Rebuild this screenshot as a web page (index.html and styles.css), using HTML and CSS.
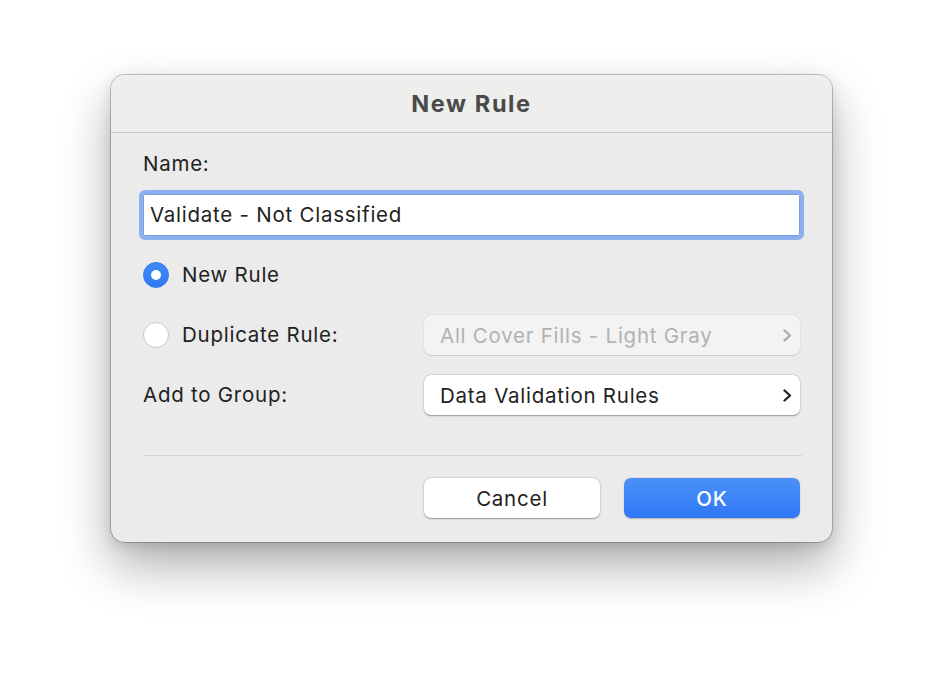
FILE: index.html
```html
<!DOCTYPE html>
<html lang="en">
<head>
<meta charset="utf-8">
<title>New Rule</title>
<link rel="stylesheet" href="styles.css">
</head>
<body>
<div class="dialog">
  <div class="titlebar">New Rule</div>
  <div class="content">
    <div class="label name-label">Name:</div>
    <div class="field">Validate - Not Classified</div>
    <div class="grid">
      <div class="radio-row"><span class="radio on"></span><span class="label">New Rule</span></div>
      <div></div>
      <div class="radio-row"><span class="radio"></span><span class="label">Duplicate Rule:</span></div>
      <div class="popup disabled"><span>All Cover Fills - Light Gray</span>
        <svg class="chev" width="9" height="13" viewBox="0 0 9 13"><path d="M1.5 1.5 L7 6.5 L1.5 11.5" fill="none" stroke="currentColor" stroke-width="2.3" stroke-linecap="round" stroke-linejoin="round"/></svg>
      </div>
      <div class="label">Add to Group:</div>
      <div class="popup"><span>Data Validation Rules</span>
        <svg class="chev" width="9" height="13" viewBox="0 0 9 13"><path d="M1.5 1.5 L7 6.5 L1.5 11.5" fill="none" stroke="currentColor" stroke-width="2.3" stroke-linecap="round" stroke-linejoin="round"/></svg>
      </div>
    </div>
    <div class="sep"></div>
    <div class="buttons">
      <div class="btn cancel">Cancel</div>
      <div class="btn ok">OK</div>
    </div>
  </div>
</div>
</body>
</html>
```

FILE: styles.css
```css
html, body {
  margin: 0;
  padding: 0;
  background: #ffffff;
}
body {
  width: 944px;
  height: 690px;
  display: flex;
  justify-content: flex-start;
  align-items: flex-start;
  padding: 75px 0 0 111px;
  box-sizing: border-box;
  font-family: Inter, "Liberation Sans", sans-serif;
  color: #222222;
}
.dialog {
  width: 721px;
  height: 467px;
  background: #ebebeb;
  border-radius: 14px;
  box-shadow: 0 0 0 1px rgba(0,0,0,0.22), 0 24px 50px rgba(0,0,0,0.32), 0 4px 14px rgba(0,0,0,0.12);
  overflow: hidden;
}
.titlebar {
  height: 56px;
  background: #eeeeed;
  border-bottom: 1px solid #c9c9c9;
  display: flex;
  align-items: center;
  justify-content: center;
  font-size: 23.5px;
  font-weight: 700;
  letter-spacing: 1.6px;
  color: #4a4a4a;
  padding-bottom: 1px;
  box-sizing: content-box;
}
.content {
  padding: 0 32px;
  display: flex;
  flex-direction: column;
}
.label,
.field,
.popup,
.btn {
  font-size: 20.5px;
  letter-spacing: 0.75px;
}
.label {
  line-height: 22px;
  color: #222222;
}
.name-label {
  margin-top: 20px;
}
.field {
  margin-top: 19px;
  height: 42px;
  box-sizing: border-box;
  background: #ffffff;
  border: 1px solid #7d9fe0;
  border-radius: 2px;
  outline: 4px solid #8cb0ee;
  outline-offset: 0;
  padding: 0 0 1px 6px;
  display: flex;
  align-items: center;
  color: #222222;
}
.grid {
  margin-top: 19px;
  display: grid;
  grid-template-columns: 281px 1fr;
  grid-auto-rows: 40px;
  row-gap: 20px;
  align-items: center;
}
.radio-row {
  display: flex;
  align-items: center;
  gap: 13px;
}
.radio {
  width: 26px;
  height: 26px;
  border-radius: 50%;
  box-sizing: border-box;
  background: #ffffff;
  border: 1px solid #cacaca;
  display: flex;
  align-items: center;
  justify-content: center;
}
.radio.on {
  background: linear-gradient(#4089f8, #2f7af4);
  border: 1px solid #2f79ee;
}
.radio.on::after {
  content: "";
  width: 10px;
  height: 10px;
  border-radius: 50%;
  background: #ffffff;
}
.popup {
  height: 40px;
  box-sizing: border-box;
  background: #ffffff;
  border-radius: 7px;
  box-shadow: 0 0.5px 1.5px rgba(0,0,0,0.35), 0 0 0 0.5px rgba(0,0,0,0.06);
  display: flex;
  align-items: center;
  justify-content: space-between;
  padding: 0 8px 0 16px;
  color: #222222;
}
.popup.disabled {
  background: #f3f3f3;
  color: #b2b2b2;
  box-shadow: 0 0.5px 1px rgba(0,0,0,0.12), 0 0 0 0.5px rgba(0,0,0,0.05);
}
.popup .chev {
  color: #222222;
}
.popup.disabled .chev {
  color: #a9a9a9;
}
.sep {
  margin-top: 40px;
  height: 1px;
  background: #d4d4d4;
  margin-right: -2px;
}
.buttons {
  margin-top: 22px;
  display: flex;
  justify-content: flex-end;
  gap: 24px;
}
.btn {
  width: 176px;
  height: 40px;
  border-radius: 7px;
  display: flex;
  align-items: center;
  justify-content: center;
  box-sizing: border-box;
}
.cancel {
  background: #ffffff;
  color: #222222;
  box-shadow: 0 0.5px 1.5px rgba(0,0,0,0.35), 0 0 0 0.5px rgba(0,0,0,0.06);
}
.ok {
  background: linear-gradient(#4a90f8, #2f77f5);
  color: #ffffff;
  font-weight: 500;
  box-shadow: 0 0.5px 1.5px rgba(0,0,0,0.25);
}
```
